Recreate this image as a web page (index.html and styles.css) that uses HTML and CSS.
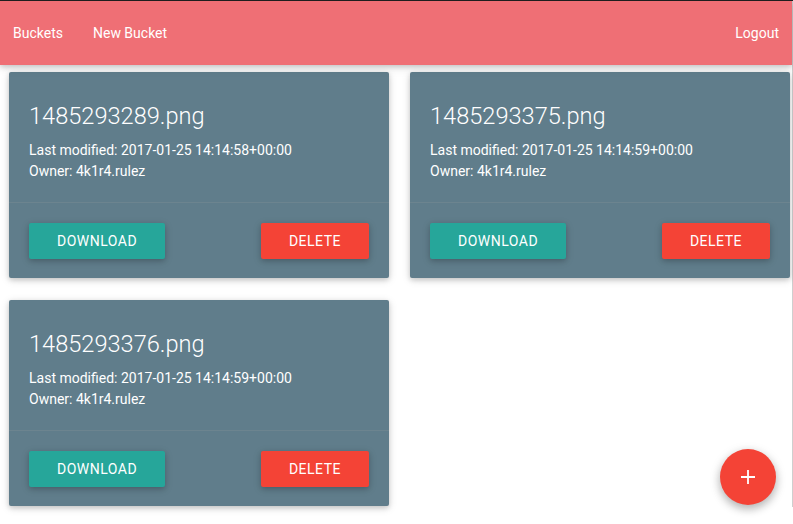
FILE: index.html
```html
<!DOCTYPE html>
<html>
<head>
<meta charset="utf-8">
<link rel="stylesheet" href="styles.css">
</head>
<body>
<div class="page">
  <nav class="navbar">
    <ul class="nav-left">
      <li><a href="#">Buckets</a></li>
      <li><a href="#">New Bucket</a></li>
    </ul>
    <ul class="nav-right">
      <li><a href="#">Logout</a></li>
    </ul>
  </nav>
  <main class="grid">
    <div class="card">
      <div class="card-content">
        <span class="card-title">1485293289.png</span>
        <p>Last modified: 2017-01-25 14:14:58+00:00</p>
        <p>Owner: 4k1r4.rulez</p>
      </div>
      <div class="card-action">
        <a class="btn btn-teal" href="#">Download</a>
        <a class="btn btn-red" href="#">Delete</a>
      </div>
    </div>
    <div class="card">
      <div class="card-content">
        <span class="card-title">1485293375.png</span>
        <p>Last modified: 2017-01-25 14:14:59+00:00</p>
        <p>Owner: 4k1r4.rulez</p>
      </div>
      <div class="card-action">
        <a class="btn btn-teal" href="#">Download</a>
        <a class="btn btn-red" href="#">Delete</a>
      </div>
    </div>
    <div class="card">
      <div class="card-content">
        <span class="card-title">1485293376.png</span>
        <p>Last modified: 2017-01-25 14:14:59+00:00</p>
        <p>Owner: 4k1r4.rulez</p>
      </div>
      <div class="card-action">
        <a class="btn btn-teal" href="#">Download</a>
        <a class="btn btn-red" href="#">Delete</a>
      </div>
    </div>
  </main>
</div>
<a class="fab" href="#" aria-label="Add">
  <svg width="16" height="16" viewBox="0 0 16 16"><path d="M8 1v14M1 8h14" stroke="#fff" stroke-width="1.8" fill="none"/></svg>
</a>
</body>
</html>
```
FILE: styles.css
```css
html, body {
  margin: 0;
  padding: 0;
  background: #fff;
  font-family: Roboto, "Liberation Sans", sans-serif;
  font-size: 14px;
  color: #fff;
}
body {
  border-top: 1px solid #1e1e1e;
  height: 523px;
  overflow: hidden;
  position: relative;
}
.page {
  width: 792px;
  border-right: 1px solid #cfcfcf;
  height: 506px;
}
.navbar {
  height: 64px;
  background: #ef6f75;
  display: flex;
  justify-content: space-between;
  align-items: center;
  padding: 0 13px;
  box-shadow: 0 2px 5px 0 rgba(0,0,0,0.16), 0 2px 10px 0 rgba(0,0,0,0.12);
  position: relative;
  z-index: 2;
}
.navbar ul {
  list-style: none;
  margin: 0;
  padding: 0;
  display: flex;
  gap: 30px;
}
.navbar a {
  color: #fff;
  text-decoration: none;
  font-size: 14px;
  line-height: 64px;
}
.grid {
  display: grid;
  grid-template-columns: 380px 380px;
  column-gap: 21px;
  row-gap: 22px;
  padding: 7px 0 0 9px;
}
.card {
  background: #607d8b;
  border-radius: 2px;
  box-shadow: 0 2px 5px 0 rgba(0,0,0,0.16), 0 2px 10px 0 rgba(0,0,0,0.12);
}
.card-content {
  padding: 20px;
}
.card-title {
  display: block;
  font-size: 23.6px;
  font-weight: 300;
  line-height: 48px;
}
.card-content p {
  margin: 0;
  font-size: 14px;
  line-height: 21px;
}
.card-action {
  border-top: 1px solid rgba(160,160,160,0.2);
  padding: 20px 20px 19px;
  display: flex;
  justify-content: space-between;
}
.btn {
  display: inline-block;
  height: 36px;
  line-height: 36px;
  padding: 0 28px;
  border-radius: 2px;
  color: #fff;
  text-decoration: none;
  text-transform: uppercase;
  letter-spacing: 0.5px;
  font-size: 14px;
  box-shadow: 0 2px 5px 0 rgba(0,0,0,0.16), 0 2px 10px 0 rgba(0,0,0,0.12);
}
.btn-teal { background: #26a69a; }
.btn-red { background: #f44336; }
.fab {
  position: absolute;
  right: 17px;
  bottom: 19px;
  width: 56px;
  height: 56px;
  border-radius: 50%;
  background: #f44336;
  display: flex;
  align-items: center;
  justify-content: center;
  box-shadow: 0 4px 8px 0 rgba(0,0,0,0.2), 0 3px 12px 0 rgba(0,0,0,0.15);
}
```
